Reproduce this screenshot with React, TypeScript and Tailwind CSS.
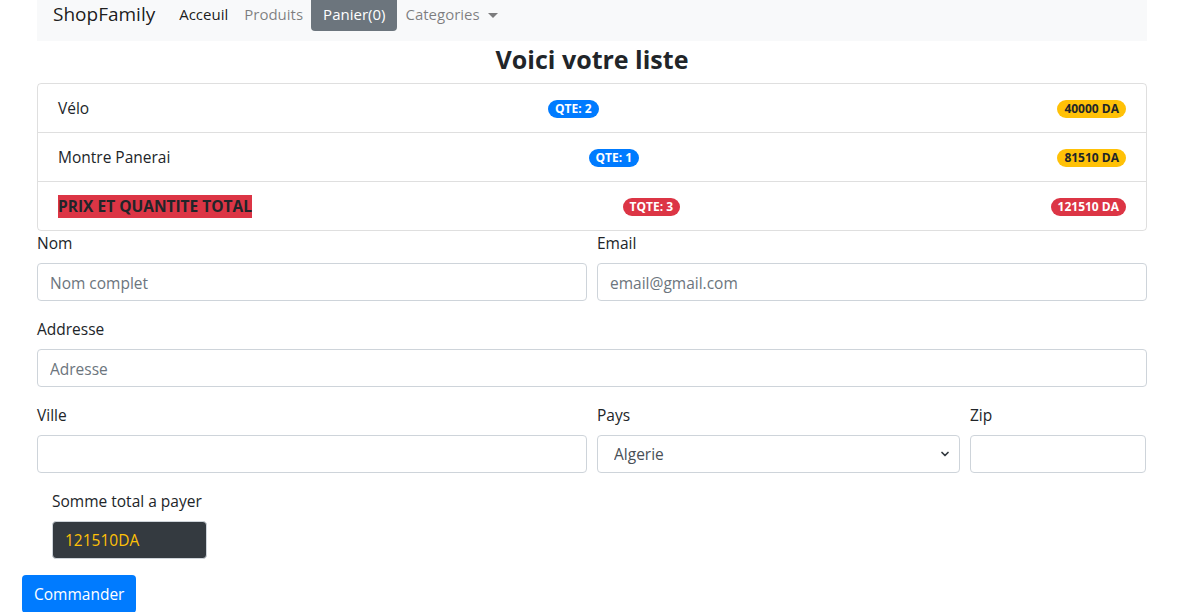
import { ChevronDown } from 'lucide-react'

export default function App() {
  const items = [
    { name: 'Vélo', qte: 2, prix: 40000 },
    { name: 'Montre Panerai', qte: 1, prix: 81510 }
  ]

  const inputCls =
    'w-full h-[38px] rounded-[4px] border border-[#ced4da] bg-white px-3 pt-[1px] text-[15.5px] text-[#495057] placeholder:text-[#6c757d] outline-none'

  return (
    <div className="min-h-[612px] bg-white text-[#212529] text-[15.5px]" style={{ fontFamily: '"Segoe UI", "Open Sans", sans-serif' }}>
      <div className="ml-[22px] w-[1140px]">
        <div className="px-[15px]">
          {/* navbar */}
          <nav className="flex h-[41px] items-start bg-[#f8f9fa] px-4 text-[15px]">
            <span className="mr-4 text-[19px] leading-[28px] text-[rgba(0,0,0,0.9)]">ShopFamily</span>
            <a className="flex h-[31px] items-center px-2 pb-[3px] text-[rgba(0,0,0,0.9)]">Acceuil</a>
            <a className="flex h-[31px] items-center px-2 pb-[3px] text-[rgba(0,0,0,0.5)]">Produits</a>
            <button className="flex h-[31px] items-center rounded-b-[4px] bg-[#6c757d] px-3 pb-[3px] text-white">Panier(0)</button>
            <a className="flex h-[31px] items-center gap-2 px-2 pb-[3px] text-[rgba(0,0,0,0.5)]">
              Categories
              <span className="mt-[2px] h-0 w-0 border-x-[5px] border-t-[5px] border-x-transparent border-t-[rgba(0,0,0,0.5)]" />
            </a>
          </nav>

          <h2 className="flex h-[42px] items-center justify-center pb-1 text-[25px] font-bold">Voici votre liste</h2>

          {/* cart list */}
          <ul className="rounded-[4px] border border-[rgba(0,0,0,0.125)]">
            {items.map((item) => (
              <li key={item.name} className="flex h-[49px] items-center justify-between border-b border-[rgba(0,0,0,0.125)] px-5 pt-[1px]">
                <span>{item.name}</span>
                <span className="rounded-full bg-[#007bff] px-[7px] py-[3px] text-xs font-bold leading-none text-white">QTE: {item.qte}</span>
                <span className="rounded-full bg-[#ffc107] px-[7px] py-[3px] text-xs font-bold leading-none text-[#212529]">{item.prix} DA</span>
              </li>
            ))}
            <li className="flex h-[48px] items-center justify-between px-5 pt-[1px]">
              <span className="bg-[#dc3545] font-bold leading-[23px]">PRIX ET QUANTITE TOTAL</span>
              <span className="rounded-full bg-[#dc3545] px-[7px] py-[3px] text-xs font-bold leading-none text-white">TQTE: 3</span>
              <span className="rounded-full bg-[#dc3545] px-[7px] py-[3px] text-xs font-bold leading-none text-white">121510 DA</span>
            </li>
          </ul>

          {/* form */}
          <div className="grid grid-cols-2 gap-x-[10px]">
            <div className="mb-4">
              <label className="mb-2 block leading-6">Nom</label>
              <input className={inputCls} placeholder="Nom complet" />
            </div>
            <div className="mb-4">
              <label className="mb-2 block leading-6">Email</label>
              <input className={inputCls} placeholder="email@gmail.com" />
            </div>
          </div>
          <div className="mb-4">
            <label className="mb-2 block leading-6">Addresse</label>
            <input className={inputCls} placeholder="Adresse" />
          </div>
          <div className="grid grid-cols-[550px_363px_176px] gap-x-[10px]">
            <div className="mb-4">
              <label className="mb-2 block leading-6">Ville</label>
              <input className={inputCls} />
            </div>
            <div className="mb-4">
              <label className="mb-2 block leading-6">Pays</label>
              <div className="relative">
                <select className={inputCls + ' appearance-none pl-4'} defaultValue="Algerie">
                  <option>Algerie</option>
                </select>
                <ChevronDown className="pointer-events-none absolute right-[9px] top-[13px] h-3 w-3 text-[#343a40]" strokeWidth={3.5} />
              </div>
            </div>
            <div className="mb-4">
              <label className="mb-2 block leading-6">Zip</label>
              <input className={inputCls} />
            </div>
          </div>
        </div>

        <div className="mb-4 px-[30px]">
          <label className="mb-2 block leading-6">Somme total a payer</label>
          <div className="flex h-[38px] w-[155px] items-center rounded-[4px] border border-[#ced4da] bg-[#343a40] px-3 pt-[1px] text-[#ffc107]">121510DA</div>
        </div>
        <button className="h-[38px] rounded-[4px] bg-[#007bff] px-3 pt-[1px] text-white">Commander</button>
      </div>
    </div>
  )
}
